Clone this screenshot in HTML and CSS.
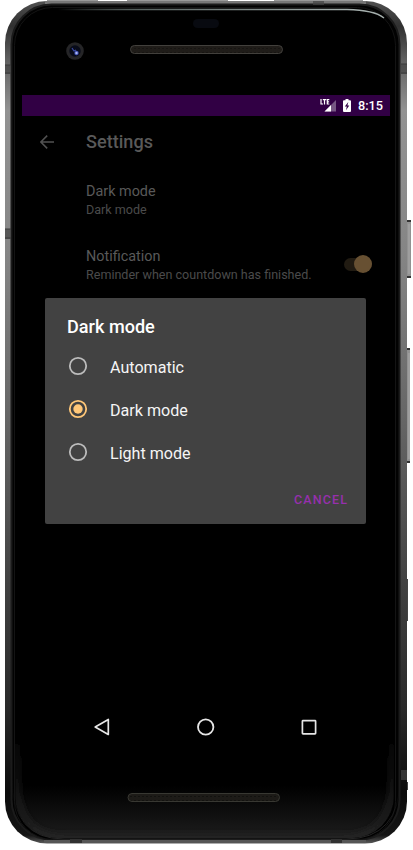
FILE: index.html
```html
<!DOCTYPE html>
<html lang="en">
<head>
<meta charset="utf-8">
<title>Settings</title>
<link rel="stylesheet" href="styles.css">
</head>
<body>
<div class="phone">
  <svg class="shell" width="413" height="850" viewBox="0 0 413 850" aria-hidden="true">
    <defs>
      <linearGradient id="metal" x1="0" y1="0" x2="0" y2="1">
        <stop offset="0" stop-color="#505050"/><stop offset=".03" stop-color="#303030"/><stop offset=".07" stop-color="#606060"/><stop offset=".13" stop-color="#929292"/><stop offset=".3" stop-color="#858585"/><stop offset=".5" stop-color="#656565"/><stop offset=".72" stop-color="#3c3c3c"/><stop offset=".84" stop-color="#292929"/><stop offset=".94" stop-color="#0b0b0b"/><stop offset=".99" stop-color="#151515"/><stop offset="1" stop-color="#5a5a5a"/>
      </linearGradient>
      <linearGradient id="shine" x1="0" y1="0" x2="1" y2="0">
        <stop offset="0" stop-color="#84918f" stop-opacity="0"/><stop offset=".25" stop-color="#596361"/><stop offset=".9" stop-color="#a5afad"/><stop offset="1" stop-color="#a5afad"/>
      </linearGradient>
      <linearGradient id="chin" x1="0" y1="0" x2="0" y2="1">
        <stop offset="0" stop-color="#1c1c1c" stop-opacity="0"/><stop offset="1" stop-color="#1e1e1e"/>
      </linearGradient>
      <linearGradient id="edge" x1="0" y1="0" x2="0" y2="1">
        <stop offset="0" stop-color="#1c1c1c" stop-opacity="0"/><stop offset=".4" stop-color="#1c1c1c" stop-opacity=".3"/><stop offset=".75" stop-color="#1f1f1f"/><stop offset="1" stop-color="#262626"/>
      </linearGradient>
      <pattern id="mesh" width="4" height="4" patternUnits="userSpaceOnUse">
        <path d="M1 0v4M3 1v3" stroke="#272420" stroke-width="1"/>
      </pattern>
      <filter id="soft" x="-10%" y="-30%" width="120%" height="160%"><feGaussianBlur stdDeviation="3"/></filter>
      <clipPath id="glass"><rect x="15" y="7" width="379" height="831" rx="42"/></clipPath>
    </defs>
    <path d="M406 220h4q1 0 1 2v54q0 2-1 2h-4zM406 348h3q1 0 1 2v111q0 2-1 2h-3z" fill="#929292"/>
    <path d="M406 221h5M406 277h5M406 349h4M406 462h4" stroke="#333" stroke-width="2"/>
    <path d="M409 224v50M409 353v106" stroke="#aaa"/>
    <path d="M406 579h2v42h-2zM406 782h2v8h-2z" fill="#444"/>
    <rect x="5" y="1" width="402" height="842.500" rx="42" fill="url(#metal)"/>
    <path d="M47 .500H98M127 .500H228M274 .500H363" stroke="#999"/>
    <path d="M45 2.500H366" stroke="#777" stroke-width="3"/>
    <rect x="11.500" y="4.500" width="388" height="835" rx="40" fill="#020202" stroke="#1b1b1b" stroke-width="2"/>
    <rect x="14.500" y="7.500" width="381" height="832" rx="38" fill="#000" stroke="#141414"/>
    <g clip-path="url(#glass)">
      <path d="M14 785H394V840H14z" fill="url(#chin)"/>
      <path d="M17 680V780Q17 837 64 837H344Q392 837 392 780V680" fill="none" stroke="url(#edge)" stroke-width="5" filter="url(#soft)"/>
    </g>
    <path d="M58 9.500H347Q374 10 384 18" fill="none" stroke="url(#shine)" stroke-width="1.500"/>
    <path d="M12 778Q12 839 64 839H346Q400 839 400 778" fill="none" stroke="url(#edge)"/>
    <path d="M44 841.500H366" stroke="#555" stroke-width="3"/>
    <path d="M70 841h12M331 841h11" stroke="#303030" stroke-width="4"/>
    <path d="M5 65h6v9H5zM5 229h6v10H5zM401 64h6v10h-6zM401 770h6v10h-6zM313 1h11v4h-11z" fill="#444" fill-opacity=".7"/>
    <path d="M5 65h6M5 73h6M5 229h6M5 238h6M401 64h6M401 73h6" stroke="#3b3b3b"/>
    <rect x="193" y="19" width="26" height="9" rx="4.500" fill="#080a10"/>
    <circle cx="75" cy="51" r="8.800" fill="#252527"/>
    <circle cx="75" cy="51" r="5.700" fill="#080b19"/>
    <path d="M72 48l2 3 2-1" fill="none" stroke="#394aa2" stroke-width="1.200"/>
    <circle cx="76.500" cy="53" r="2.200" fill="#4051b0"/><circle cx="76.500" cy="53" r="1.200" fill="#a9b6f5"/>
    <rect x="130.500" y="45.500" width="152" height="8" rx="4" fill="#171512"/>
    <rect x="130.500" y="45.500" width="152" height="8" rx="4" fill="url(#mesh)" stroke="#42403c"/>
    <rect x="128" y="793.500" width="151.500" height="8" rx="4" fill="#12120f"/>
    <rect x="128" y="793.500" width="151.500" height="8" rx="4" fill="url(#mesh)" stroke="#383832"/>
  </svg>

  <main class="screen">
    <header class="status">
      <svg width="17" height="13" viewBox="0 0 17 13" aria-label="LTE signal">
        <path d="M16 1V12.500H4.500z" fill="#765783"/>
        <path d="M11 6V12.500H4.500z" fill="#fff"/>
        <path d="M1 0v5h2M2.800 .600h3.400M4.500 .600V5.600M9.300 .600H7.300v4.400h2M7.300 2.800h1.800" fill="none" stroke="#fff" stroke-width="1.200"/>
      </svg>
      <svg class="battery" width="8" height="13" viewBox="0 0 8 13" aria-label="Battery charging">
        <path d="M2.500 0h3v1.200H7q1 0 1 1V12q0 1-1 1H1q-1 0-1-1V2.200q0-1 1-1h1.500z" fill="#fff"/>
        <path d="M5.300 3L1.800 7.500h2L3 11.200 6.300 6.500H4.400z" fill="#310044"/>
      </svg>
      <span class="time">8:15</span>
    </header>

    <section class="settings">
      <div class="toolbar">
        <svg class="back" width="14" height="14" viewBox="0 0 14 14"><path d="M14 7H1M7.200 .600L.900 7l6.300 6.400" fill="none" stroke="#515151" stroke-width="1.500"/></svg>
        <h1>Settings</h1>
      </div>
      <div class="preference">
        <div class="label">Dark mode</div>
        <div class="summary">Dark mode</div>
      </div>
      <div class="preference notification">
        <div>
          <div class="label">Notification</div>
          <div class="summary">Reminder when countdown has finished.</div>
        </div>
        <div class="switch"><div class="thumb"></div></div>
      </div>
    </section>

    <section class="dialog" role="dialog">
      <h2>Dark mode</h2>
      <div class="option"><svg class="radio" width="20" height="20" viewBox="0 0 20 20"><circle cx="10" cy="10" r="8.200" fill="none" stroke="#bcbcbc" stroke-width="1.800"/></svg><span>Automatic</span></div>
      <div class="option"><svg class="radio" width="20" height="20" viewBox="0 0 20 20"><circle cx="10" cy="10" r="8.200" fill="none" stroke="#ffc778" stroke-width="1.800"/><circle cx="10" cy="10" r="4.700" fill="#ffc778"/></svg><span>Dark mode</span></div>
      <div class="option"><svg class="radio" width="20" height="20" viewBox="0 0 20 20"><circle cx="10" cy="10" r="8.200" fill="none" stroke="#bcbcbc" stroke-width="1.800"/></svg><span>Light mode</span></div>
      <div class="actions"><span class="cancel">CANCEL</span></div>
    </section>

    <nav class="navigation">
      <svg width="18" height="18" viewBox="0 0 18 18"><path d="M15.300 1.500v15L2.200 9z" fill="none" stroke="#e6e6e6" stroke-width="1.700" stroke-linejoin="round"/></svg>
      <svg width="18" height="18" viewBox="0 0 18 18"><circle cx="8.700" cy="9" r="7.700" fill="none" stroke="#e6e6e6" stroke-width="1.800"/></svg>
      <svg width="18" height="18" viewBox="0 0 18 18"><rect x="2.400" y="2.600" width="13.200" height="13.200" rx=".6" fill="none" stroke="#e6e6e6" stroke-width="1.700"/></svg>
    </nav>
  </main>
</div>
</body>
</html>
```

FILE: styles.css
```css
* { box-sizing: border-box; }
body {
  margin: 0;
  background: #fff;
  font-family: Roboto, sans-serif;
}
.phone {
  position: relative;
  width: 413px;
  height: 850px;
  padding: 95px 23px 0 22px;
  overflow: hidden;
}
.shell { position: absolute; inset: 0; }
.screen { position: relative; width: 368px; }
.status {
  height: 21px;
  display: flex;
  align-items: center;
  justify-content: flex-end;
  padding-right: 6px;
  background: #310044;
  color: #fff;
}
.battery { margin-left: 6px; }
.time { width: 26px; margin-left: 7px; font-size: 12.7px; font-weight: 500; white-space: nowrap; }
.settings { height: 181px; padding-left: 64px; white-space: nowrap; }
.toolbar { display: flex; align-items: center; height: 52px; margin-left: -46px; }
.back { margin-right: 32px; }
h1 { margin: 0; font-size: 18.1px; font-weight: 500; line-height: 22px; color: #595959; }
.preference { height: 65px; padding-top: 14px; }
.label { font-size: 14.4px; line-height: 19px; color: #595959; }
.summary { font-size: 12.55px; line-height: 17px; color: #4b4b4b; }
.notification { display: flex; justify-content: space-between; padding-right: 18px; }
.switch { width: 28px; height: 13px; margin-top: 10.5px; border-radius: 7px; background: #211b12; display: flex; align-items: center; justify-content: flex-end; }
.thumb { width: 18px; height: 18px; flex: none; border-radius: 50%; background: #675032; }
.dialog {
  width: 321px;
  height: 226.500px;
  margin: .5px 0 0 23px;
  padding: 17.5px 18px 0 22px;
  border-radius: 2px;
  background: #424242;
  color: #fff;
}
h2 { margin: 0 0 8px; font-size: 18.1px; font-weight: 500; line-height: 23px; }
.option { display: flex; align-items: center; height: 43px; padding-left: 1px; font-size: 16.1px; color: #f5f5f5; }
.radio { margin: -3px 22px 0 0; }
.actions { display: flex; justify-content: flex-end; margin-top: 16px; }
.cancel { font-size: 12.5px; font-weight: 500; line-height: 18px; letter-spacing: 1.1px; color: #9630ad; }
.navigation { display: flex; justify-content: space-between; margin-top: 194px; padding: 0 72px 0 71px; }
```
